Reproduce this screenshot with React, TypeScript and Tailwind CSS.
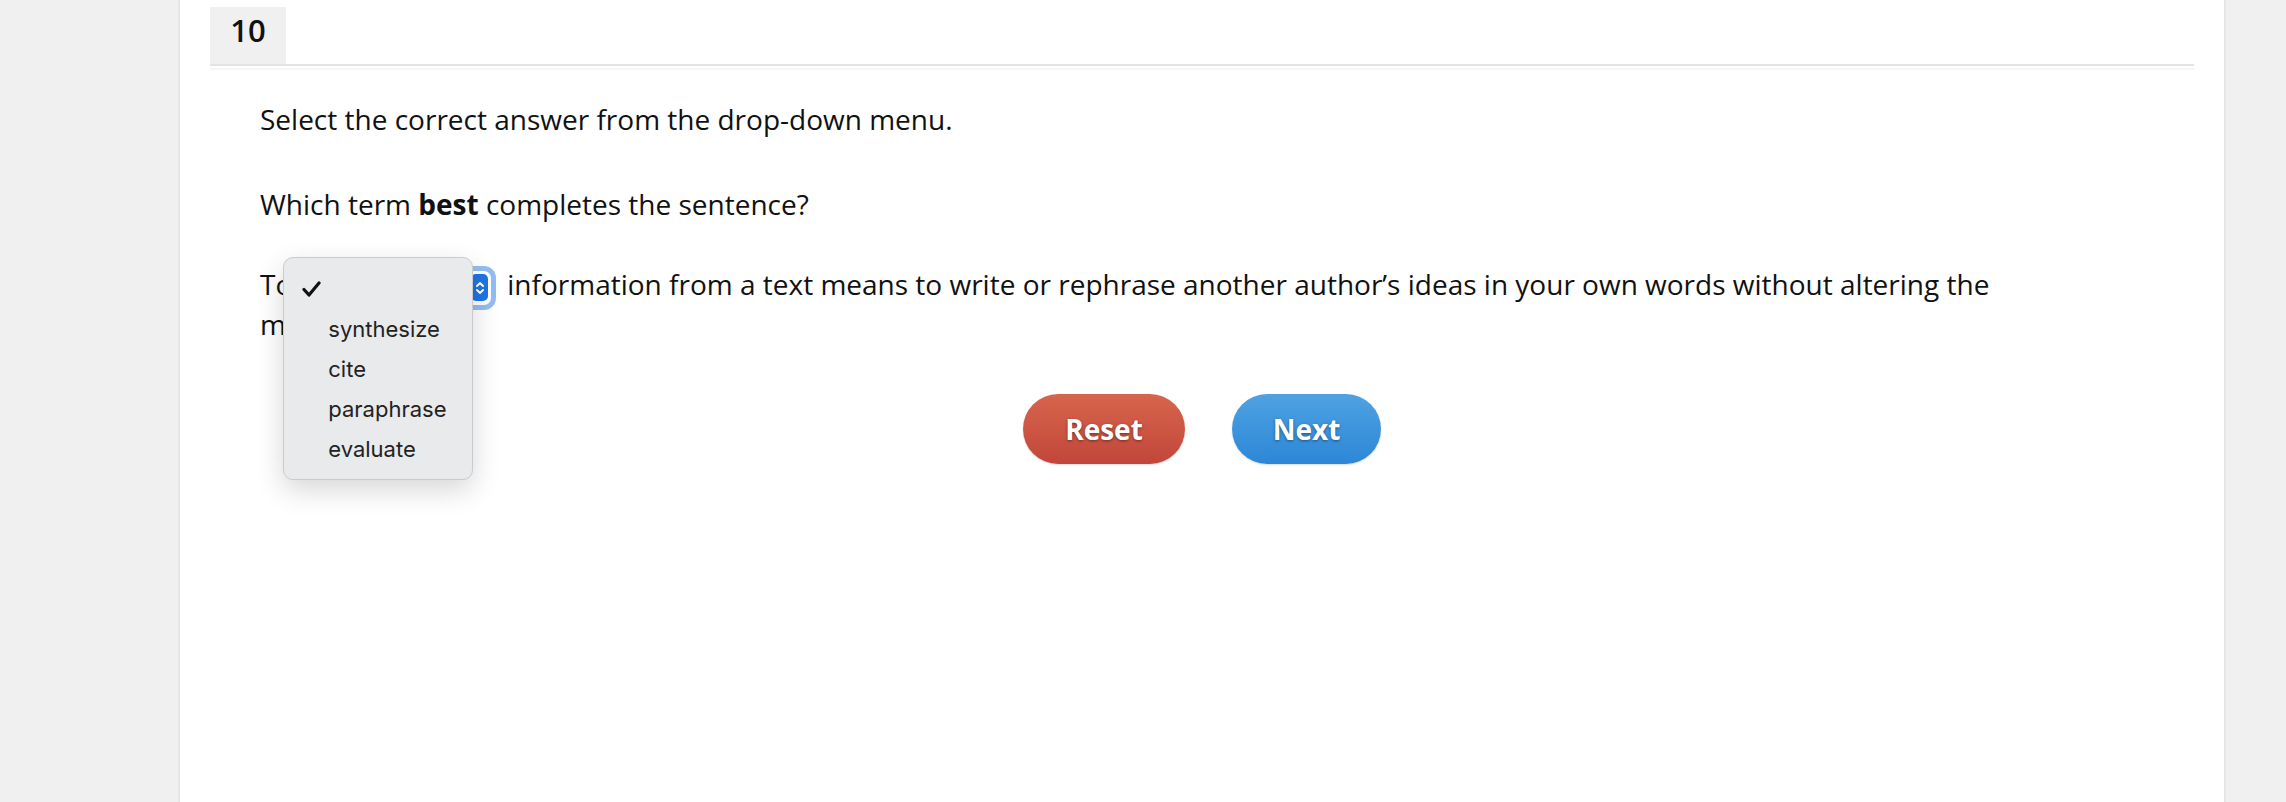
import React from "react";

const options = ["synthesize", "cite", "paraphrase", "evaluate"];

function Chevrons() {
  return (
    <svg width="10" height="16" viewBox="0 0 10 16" fill="none" stroke="white" strokeWidth="2" strokeLinecap="round" strokeLinejoin="round">
      <path d="M2 6 L5 3 L8 6" />
      <path d="M2 10 L5 13 L8 10" />
    </svg>
  );
}

function SelectOpen() {
  return (
    <span className="relative inline-flex align-middle ml-[7px] mr-[16px] -my-[4px] h-[34px] w-[192px] rounded-[7px] bg-white ring-[5px] ring-[#93bdf2] justify-end items-center pr-[3px]">
      <span className="flex items-center justify-center w-[17px] h-[27px] rounded-[5px] bg-[#1f74e2]">
        <Chevrons />
      </span>

      {/* open menu */}
      <span className="absolute left-[-16px] top-[-14px] z-10 block w-[190px] rounded-[10px] border border-[#c9cbcd] bg-[#e8eaeb] pt-[11px] pb-[10px] shadow-[0_10px_28px_rgba(0,0,0,0.16)] font-['Inter',sans-serif] text-[22px] leading-[40px] text-[#222]">
        <span className="flex h-[40px] items-center pl-[18px]">
          <svg width="19" height="16" viewBox="0 0 19 16" fill="none" stroke="#111" strokeWidth="3.2" strokeLinecap="round" strokeLinejoin="round">
            <path d="M2 8.5 L7 14 L17 2" />
          </svg>
        </span>
        {options.map((o) => (
          <span key={o} className="block h-[40px] pl-[44px]">
            {o}
          </span>
        ))}
      </span>
    </span>
  );
}

export default function App() {
  return (
    <div className="h-[802px] overflow-hidden bg-[#f0f0f0] font-['Open_Sans',sans-serif] text-[#111]">
      <div className="ml-[178px] h-full w-[2048px] border-x-2 border-[#e6e6e6] bg-white px-[30px]">
        {/* header */}
        <div className="pt-[7px] border-b-2 border-[#e3e3e3]">
          <div className="flex h-[57px] w-[76px] items-center justify-center bg-[#f0f0f0] pb-[10px] text-[31px] font-semibold">
            10
          </div>
        </div>
        <div className="mt-[2px] h-[2px] bg-[#f6f6f6]" />

        {/* question */}
        <div className="pl-[50px] pr-[134px] pt-[28px] text-[28px] leading-[42px]">
          <p>Select the correct answer from the drop-down menu.</p>
          <p className="mt-[43px]">
            Which term <span className="font-bold">best</span> completes the sentence?
          </p>
          <p className="mt-[39px] leading-[40px]">
            To
            <SelectOpen />
            information from a text means to write or rephrase another author’s ideas in your own words without altering the meaning.
          </p>
        </div>

        {/* buttons */}
        <div className="mt-[50px] flex justify-center gap-[47px]">
          <button className="h-[70px] w-[162px] rounded-full bg-gradient-to-b from-[#d6654d] to-[#c2463a] text-[28px] font-bold text-white [text-shadow:0_1px_3px_rgba(0,0,0,0.45)] shadow-[0_1px_2px_rgba(0,0,0,0.15)]">
            Reset
          </button>
          <button className="h-[70px] w-[149px] rounded-full bg-gradient-to-b from-[#4ea2e3] to-[#2d87d6] text-[28px] font-bold text-white [text-shadow:0_1px_3px_rgba(0,0,0,0.45)] shadow-[0_1px_2px_rgba(0,0,0,0.15)]">
            Next
          </button>
        </div>
      </div>
    </div>
  );
}
